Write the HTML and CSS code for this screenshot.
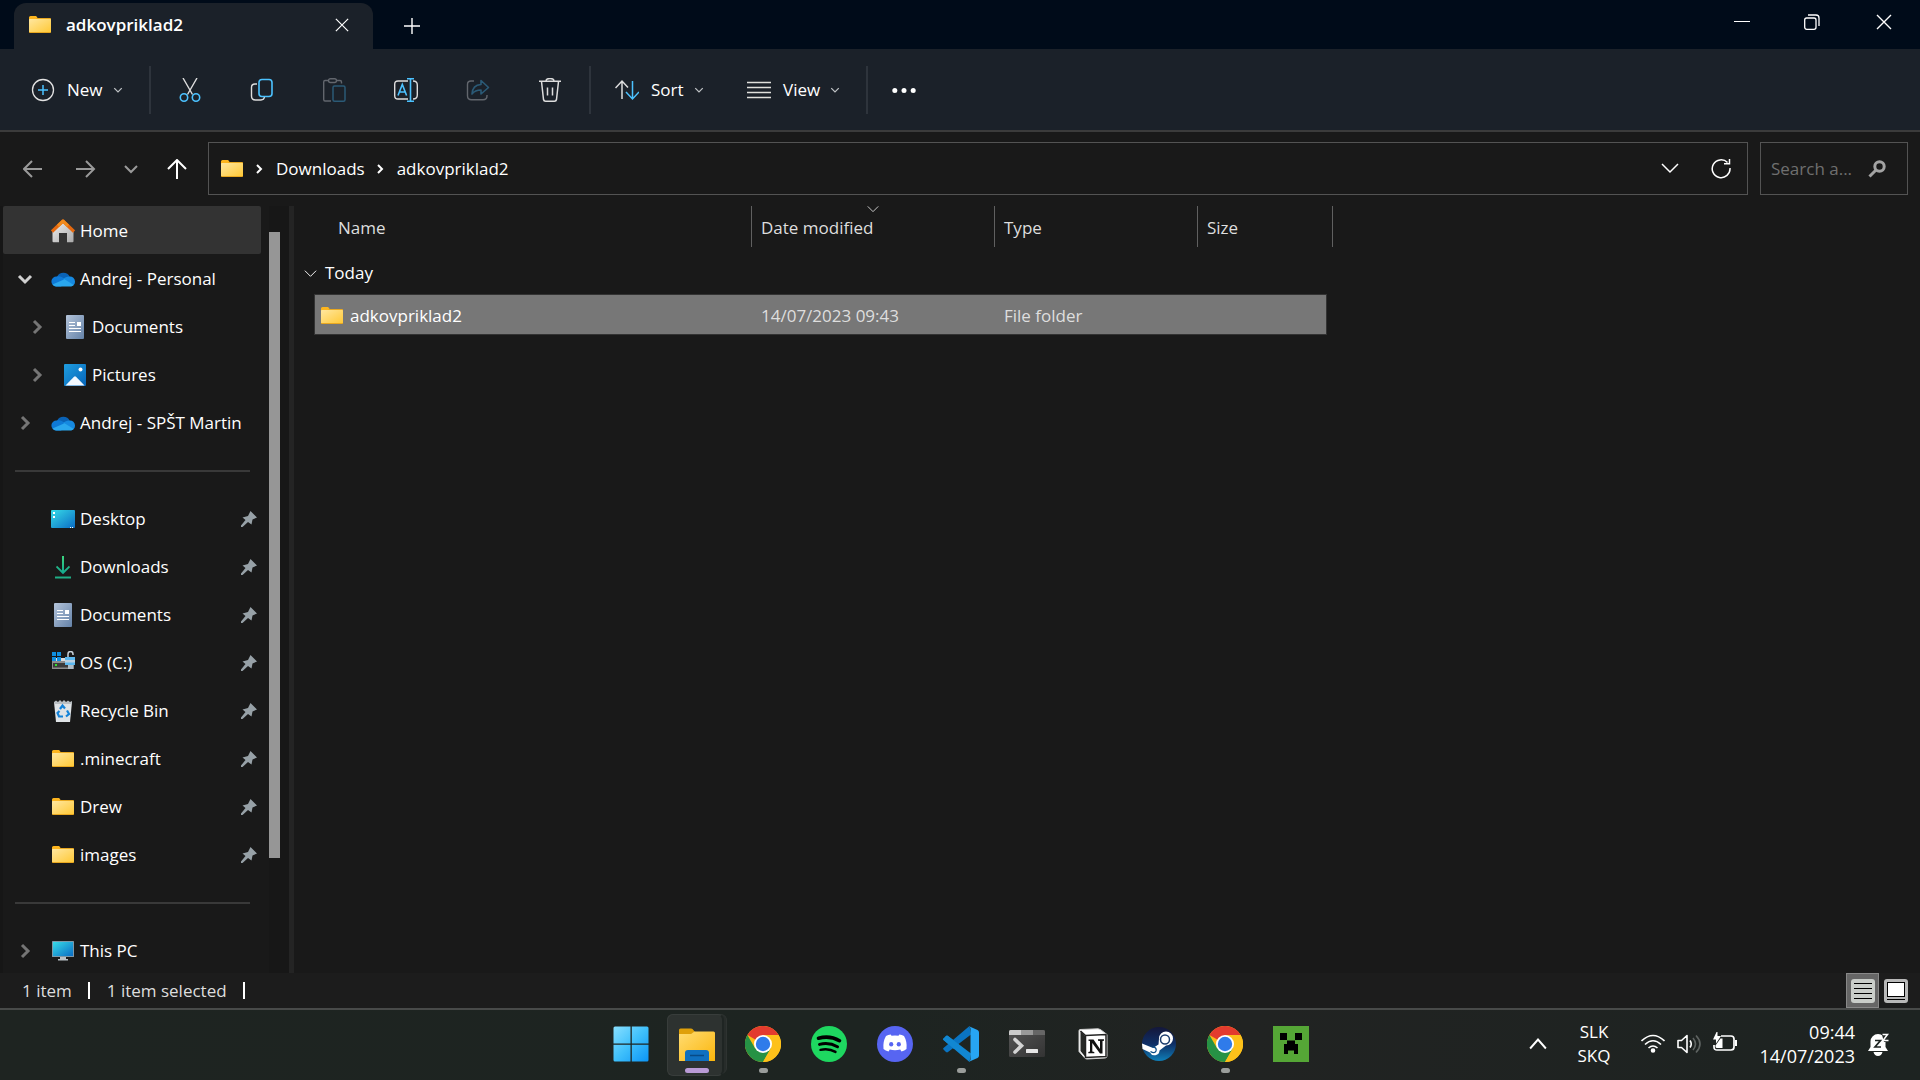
FILE: index.html
```html
<!DOCTYPE html>
<html lang="en">
  <head>
    <meta charset="UTF-8" />
    <meta name="viewport" content="width=device-width, initial-scale=1" />
    <title>adkovpriklad2</title>
    <link rel="stylesheet" href="styles.css">
  </head>
  <body>
    <!-- Shared icons -->
    <svg class="sprite" aria-hidden="true">
      <defs>
        <linearGradient id="gFolder" x1="0" y1="0" x2="1" y2="1">
          <stop offset="0" stop-color="#ffe7a0" /><stop offset="1" stop-color="#ffc937" />
        </linearGradient>
        <linearGradient id="gScreen" x1="0" y1="0" x2="1" y2="1">
          <stop offset="0" stop-color="#37dbe8" /><stop offset="1" stop-color="#0a6cc4" />
        </linearGradient>
        <linearGradient id="gDoc" x1="0" y1="0" x2="1" y2="1">
          <stop offset="0" stop-color="#b4c4da" /><stop offset="1" stop-color="#6482a8" />
        </linearGradient>
        <linearGradient id="gPic" x1="0" y1="0" x2="1" y2="1">
          <stop offset="0" stop-color="#1f9ee0" /><stop offset="1" stop-color="#0664b8" />
        </linearGradient>
        <linearGradient id="gHouse" x1="0" y1="0" x2="1" y2="1">
          <stop offset="0" stop-color="#efefef" /><stop offset="1" stop-color="#a9a9a9" />
        </linearGradient>
        <linearGradient id="gDown" x1="0" y1="0" x2="0" y2="1">
          <stop offset="0" stop-color="#3bd57f" /><stop offset="1" stop-color="#12a68f" />
        </linearGradient>
        <linearGradient id="gWin" gradientUnits="userSpaceOnUse" x1="0" y1="0" x2="36" y2="36">
          <stop offset="0" stop-color="#8be0ff" /><stop offset="0.5" stop-color="#3fc0fb" /><stop offset="1" stop-color="#0a93f5" />
        </linearGradient>
        <linearGradient id="gExp" x1="0" y1="0" x2="1" y2="1">
          <stop offset="0" stop-color="#ffdc72" /><stop offset="1" stop-color="#fbb60c" />
        </linearGradient>
        <linearGradient id="gSteam" x1="0" y1="0" x2="0" y2="1">
          <stop offset="0" stop-color="#14173a" /><stop offset="0.5" stop-color="#0f2f66" /><stop offset="1" stop-color="#0f7fb8" />
        </linearGradient>
        <linearGradient id="gTerm" x1="0" y1="0" x2="1" y2="1">
          <stop offset="0" stop-color="#555" /><stop offset="1" stop-color="#333" />
        </linearGradient>
      </defs>

      <symbol id="folder" viewBox="0 0 24 24">
        <rect x="1" y="5" width="22" height="15" rx="0.8" fill="#e9a820" />
        <rect x="1" y="6" width="22" height="13" rx="0.6" fill="url(#gFolder)" />
        <path d="M1 4.500Q1 3 2.500 3H8l1.500 1.500L8 6H1z" fill="#fdb51e" />
      </symbol>
      <symbol id="home" viewBox="0 0 24 24">
        <path d="M1.500 12 12 2.500 22.500 12v10.300q0 1-1 1H16V14H8v9.300H2.500q-1 0-1-1z" fill="url(#gHouse)" />
        <path d="M1 12.500 12 2l11 10.500" fill="none" stroke="#e5690f" stroke-width="3.200" stroke-linejoin="round" />
        <path d="M7 6.800 12 2l5 4.800" fill="none" stroke="#f08a1c" stroke-width="3" stroke-linejoin="round" />
      </symbol>
      <symbol id="cloud" viewBox="0 0 24 24">
        <path d="M6 10a7 7 0 0 1 12.800 0L12 15z" fill="#0a62b5" />
        <path d="M5 19.500a5 5 0 0 1 .8-10c3.200-1 5 .5 7.700 2.200L17 13.800 10 19.500z" fill="#0e79d6" />
        <path d="M18.500 9.500a5 5 0 0 1 5.500 5 5 5 0 0 1-4 5l-8-7.500c2-1.500 3.500-2.500 6.500-2.500z" fill="#1689e0" />
        <path d="M1.500 17.500 13.500 12.300 22.800 18a4.500 4.500 0 0 1-3.300 1.500H5.200a4.500 4.500 0 0 1-3.700-2z" fill="#2aa7ee" />
      </symbol>
      <symbol id="doc" viewBox="0 0 24 24">
        <rect x="3" y="0" width="18" height="24" rx="1" fill="url(#gDoc)" />
        <path d="M6 7.500h6M6 10.500h6M6 13.500h12M6 16.500h12" stroke="#fff" stroke-width="1.200" />
        <rect x="14" y="7" width="4" height="4" fill="#fff" />
      </symbol>
      <symbol id="pictures" viewBox="0 0 24 24">
        <rect x="1" y="1" width="22" height="22" rx="1" fill="url(#gPic)" />
        <path d="M2.500 22.500 11 13.800q1-1 2 0l8.500 8.700z" fill="#f2f8ff" />
        <circle cx="17.500" cy="6.500" r="2" fill="#fff" />
      </symbol>
      <symbol id="desktop" viewBox="0 0 24 24">
        <rect x="0" y="3" width="24" height="18" rx="1" fill="url(#gScreen)" />
        <path d="M2 5h2v2H2zM2 9h2v2H2z" fill="#fff" />
        <path d="M19 20h1v1h-1zM21 20h1v1h-1z" fill="#fff" />
      </symbol>
      <symbol id="download" viewBox="0 0 24 24">
        <path d="M11 1h2v14.500l5-4.800 1 1.500-7 7-7-7 1-1.500 5 4.800z" fill="url(#gDown)" />
        <rect x="4" y="21.500" width="16" height="2" fill="#1fae86" />
      </symbol>
      <symbol id="drive" viewBox="0 0 24 24">
        <path d="M4 7h18l1 5H1z" fill="#dcdcdc" />
        <rect x="1" y="10" width="22" height="8" fill="#8d8d8d" />
        <rect x="2" y="12" width="20" height="4.500" fill="#3b3b3b" />
        <rect x="4" y="13" width="2" height="2" fill="#35e02c" />
        <path d="M1 1h4v4H1zM6 1h4v4H6zM1 6h4v4H1zM6 6h4v4H6z" fill="#0f8fe0" />
        <path d="M17 6V3a2.500 2.500 0 0 1 5 0v1" fill="none" stroke="#c8d2da" stroke-width="1.500" />
        <path d="M14 6h10v8H14z" fill="#5cb8ef" /><path d="M14 9h10v2.500H14z" fill="#bcd0df" />
        <rect x="17" y="14" width="5" height="4" fill="#aebcc6" />
      </symbol>
      <symbol id="bin" viewBox="0 0 24 24">
        <path d="M3 3h18l-2 20H5z" fill="#dfe3e6" />
        <path d="m3 3 2-1.500L7 3l2-2 2 2 2-2 2 2 2-1.500L19 3l2-1v3H3z" fill="#b9bec2" />
        <path d="m9 10 2.500-3.500L14 9.500M16 11.500l2 3.500-3 2.500M12 17.500H8L6.500 14 8.500 12" fill="none" stroke="#1382d8" stroke-width="2.200" />
      </symbol>
      <symbol id="pc" viewBox="0 0 24 24">
        <rect x="1" y="2" width="22" height="16" rx="0.600" fill="#7e98a8" />
        <rect x="2" y="3" width="20" height="14" fill="url(#gScreen)" />
        <path d="M9 18h6v2h2v1.500H7V20h2z" fill="#b8c0c5" />
      </symbol>
      <symbol id="pin" viewBox="0 0 16 16">
        <path d="M9.500 0 16 6.500 11.500 8.500 10.500 13.500 7 11 1.500 16 0 16 0 14.500 4.500 9 1.500 6.500 7 5z" fill="#97a1a7" />
      </symbol>
      <symbol id="chev" viewBox="0 0 16 16">
        <path d="m2 5 6 6 6-6" fill="none" stroke="currentColor" />
      </symbol>
      <symbol id="cross" viewBox="0 0 16 16">
        <path d="m1 1 14 14M15 1 1 15" fill="none" stroke="currentColor" stroke-width="1.400" />
      </symbol>
      <symbol id="chrome" viewBox="0 0 36 36">
        <circle cx="18" cy="18" r="18" fill="#fbbc16" />
        <path d="M18 18 2.400 9A18 18 0 0 1 33.600 9z" fill="#e33b2e" />
        <path d="M2.400 9A18 18 0 0 0 18 36l7.800-13.500L18 18 10.200 22.500z" fill="#269245" />
        <path d="M18 9h15.600A18 18 0 0 1 18 36l7.800-13.500z" fill="#fdc11a" />
        <circle cx="18" cy="18" r="9" fill="#fff" />
        <circle cx="18" cy="18" r="7.200" fill="#2f7bea" />
      </symbol>
    </svg>

    <div class="window">
      <!-- Title bar -->
      <header class="titlebar">
        <div class="tab">
          <svg class="icon24"><use href="#folder" /></svg>
          <span class="tab-title">adkovpriklad2</span>
          <button class="tab-close" aria-label="Close tab"><svg><use href="#cross" /></svg></button>
        </div>
        <button class="new-tab" aria-label="New tab">
          <svg viewBox="0 0 16 16"><path d="M8 0v16M0 8h16" stroke="#fff" stroke-width="1.400" /></svg>
        </button>
        <div class="window-controls">
          <button aria-label="Minimize"><svg viewBox="0 0 16 16"><path d="M0 7.500h16" stroke="#fff" /></svg></button>
          <button aria-label="Restore">
            <svg viewBox="0 0 16 16" fill="none" stroke="#fff" stroke-width="1.300"><rect x="0.700" y="4" width="11.300" height="11.300" rx="2" /><path d="M4 1h8q3 0 3 3v8" /></svg>
          </button>
          <button aria-label="Close"><svg><use href="#cross" /></svg></button>
        </div>
      </header>

      <!-- Command bar -->
      <div class="toolbar">
        <button class="menu-btn menu-new">
          <svg class="icon24" viewBox="0 0 24 24" fill="none"><circle cx="12" cy="12" r="10.500" stroke="#e2e2e2" stroke-width="1.300" /><path d="M12 7v10M7 12h10" stroke="#4cc2ff" stroke-width="1.500" /></svg>
          <span>New</span>
          <svg class="caret"><use href="#chev" /></svg>
        </button>
        <span class="separator"></span>
        <button class="tool-btn" aria-label="Cut">
          <svg class="icon24" viewBox="0 0 24 24" fill="none"><path d="M5 0l9.500 16.500M19 0 9.500 16.500" stroke="#ddd" stroke-width="1.400" /><g stroke="#4cc2ff" stroke-width="1.600"><circle cx="6" cy="19.500" r="3.700" /><circle cx="18" cy="19.500" r="3.700" /></g></svg>
        </button>
        <button class="tool-btn" aria-label="Copy">
          <svg class="icon24" viewBox="0 0 24 24" fill="none"><path d="M7 6H5Q1.500 6 1.500 9.500V18q0 4 4 4H11q3 0 3.500-3" stroke="#ddd" stroke-width="1.400" /><rect x="9" y="1.500" width="13" height="17" rx="3" stroke="#4cc2ff" stroke-width="1.600" /></svg>
        </button>
        <button class="tool-btn" aria-label="Paste" disabled>
          <svg class="icon24" viewBox="0 0 24 24" fill="none"><path d="M6 2.500H3q-1.300 0-1.300 1.500v17.500q0 1.500 1.300 1.500H9M15 2.500h3q1.500 0 1.500 1.500v1.500" stroke="#62666d" stroke-width="1.400" /><rect x="6.500" y="0.700" width="8" height="3.800" rx="1.900" stroke="#62666d" stroke-width="1.400" /><rect x="11" y="8" width="12" height="15.200" rx="1.500" stroke="#2b5a76" stroke-width="1.500" /></svg>
        </button>
        <button class="tool-btn" aria-label="Rename">
          <svg class="icon24" viewBox="0 0 24 24" fill="none"><path d="M14 3H4Q.7 3 .7 6.300v11.400Q.7 21 4 21h10M19 3q4.300 0 4.300 4v10q0 4-4.300 4" stroke="#ddd" stroke-width="1.400" /><path d="M13 .8h7M13 23.200h7M16.500 1v22M4 17.500 8.300 6.500l4.300 11M5.500 14h5.700" stroke="#4cc2ff" stroke-width="1.600" /></svg>
        </button>
        <button class="tool-btn" aria-label="Share" disabled>
          <svg class="icon24" viewBox="0 0 24 24" fill="none"><path d="M8 3H5Q1.500 3 1.500 6.500v11.300q0 4 4 4H17q4 0 4-4V17" stroke="#62666d" stroke-width="1.400" /><path d="M15 2.500l7.500 7L15 16v-4q-6 0-9 4 .5-9 9-9.500z" stroke="#2b5a76" stroke-width="1.600" stroke-linejoin="round" /></svg>
        </button>
        <button class="tool-btn" aria-label="Delete">
          <svg class="icon24" viewBox="0 0 24 24" fill="none" stroke="#ddd" stroke-width="1.500"><path d="M1 3.200h22M8 3q0-2.500 4-2.500T16 3M3.500 3.500l2 18q.3 1.700 2 1.700h9q1.700 0 2-1.700l2-18M9.500 9.500v8M14.500 9.500v8" /></svg>
        </button>
        <span class="separator"></span>
        <button class="menu-btn">
          <svg class="icon24" viewBox="0 0 24 24" fill="none" stroke-width="1.500"><path d="M7 21V3M.5 10 7 3l6 6.500" stroke="#ddd" /><path d="M17.500 3v18M11 14l6.500 7 6.500-7" stroke="#4cc2ff" /></svg>
          <span>Sort</span>
          <svg class="caret"><use href="#chev" /></svg>
        </button>
        <button class="menu-btn menu-view">
          <svg class="icon24" viewBox="0 0 24 24"><path d="M0 4.500h24M0 9.500h24M0 14.500h24M0 19.500h24" stroke="#e0e0dc" stroke-width="1.400" /></svg>
          <span>View</span>
          <svg class="caret"><use href="#chev" /></svg>
        </button>
        <span class="separator"></span>
        <button class="tool-btn" aria-label="See more">
          <svg class="icon24" viewBox="0 0 24 24" fill="#fff"><circle cx="2.800" cy="12.500" r="2.500" /><circle cx="12" cy="12.500" r="2.500" /><circle cx="21.200" cy="12.500" r="2.500" /></svg>
        </button>
      </div>

      <!-- Navigation and address -->
      <div class="navbar">
        <div class="nav-buttons">
          <button class="dim" aria-label="Back"><svg viewBox="0 0 20 20"><path d="M19 10H1M9 2l-8 8 8 8" /></svg></button>
          <button class="dim" aria-label="Forward"><svg viewBox="0 0 20 20"><path d="M0 10h18M10 2l8 8-8 8" /></svg></button>
          <button class="dim recent" aria-label="Recent locations"><svg viewBox="0 0 20 20"><path d="m4 7 6 6 6-6" /></svg></button>
          <button aria-label="Up"><svg viewBox="0 0 20 20"><path d="M10 20V1M1 10l9-9 9 9" /></svg></button>
        </div>
        <div class="address">
          <svg class="icon24"><use href="#folder" /></svg>
          <svg class="crumb-arrow" viewBox="0 0 8 12"><path d="m1 2 4 4-4 4" /></svg>
          <a href="#">Downloads</a>
          <svg class="crumb-arrow" viewBox="0 0 8 12"><path d="m1 2 4 4-4 4" /></svg>
          <a href="#">adkovpriklad2</a>
          <div class="address-actions">
            <button aria-label="Previous locations"><svg class="icon20" viewBox="0 0 20 20"><path d="m2 5 8 8 8-8" fill="none" stroke="#fff" stroke-width="1.500" /></svg></button>
            <button aria-label="Refresh"><svg class="icon20" viewBox="0 0 20 20"><path d="M16.500 3.500A8.900 8.900 0 1 0 19 9M18.500 0v4.800H13" fill="none" stroke="#fff" stroke-width="1.500" /></svg></button>
          </div>
        </div>
        <div class="search">
          <input type="text" placeholder="Search a..." aria-label="Search adkovpriklad2" />
          <svg viewBox="0 0 18 18"><circle cx="11.500" cy="6.500" r="4.700" fill="none" stroke="#a3a3a3" stroke-width="3" /><path d="M8 10 1.500 16.500" stroke="#a3a3a3" stroke-width="3" /></svg>
        </div>
      </div>

      <div class="content">
        <!-- Folder tree -->
        <nav class="sidebar" aria-label="Folders">
          <ul>
            <li class="active"><span class="twist"></span><a href="#"><svg class="icon24"><use href="#home" /></svg>Home</a></li>
            <li><button class="twist open" aria-label="Collapse"><svg><use href="#chev" /></svg></button><a href="#"><svg class="icon24"><use href="#cloud" /></svg>Andrej - Personal</a></li>
            <li class="child"><button class="twist" aria-label="Expand"><svg><use href="#chev" /></svg></button><a href="#"><svg class="icon24"><use href="#doc" /></svg>Documents</a></li>
            <li class="child"><button class="twist" aria-label="Expand"><svg><use href="#chev" /></svg></button><a href="#"><svg class="icon24"><use href="#pictures" /></svg>Pictures</a></li>
            <li><button class="twist" aria-label="Expand"><svg><use href="#chev" /></svg></button><a href="#"><svg class="icon24"><use href="#cloud" /></svg>Andrej - SPŠT Martin</a></li>
            <li class="divider"></li>
            <li><span class="twist"></span><a href="#"><svg class="icon24"><use href="#desktop" /></svg>Desktop</a><svg class="pin"><use href="#pin" /></svg></li>
            <li><span class="twist"></span><a href="#"><svg class="icon24"><use href="#download" /></svg>Downloads</a><svg class="pin"><use href="#pin" /></svg></li>
            <li><span class="twist"></span><a href="#"><svg class="icon24"><use href="#doc" /></svg>Documents</a><svg class="pin"><use href="#pin" /></svg></li>
            <li><span class="twist"></span><a href="#"><svg class="icon24"><use href="#drive" /></svg>OS (C:)</a><svg class="pin"><use href="#pin" /></svg></li>
            <li><span class="twist"></span><a href="#"><svg class="icon24"><use href="#bin" /></svg>Recycle Bin</a><svg class="pin"><use href="#pin" /></svg></li>
            <li><span class="twist"></span><a href="#"><svg class="icon24"><use href="#folder" /></svg>.minecraft</a><svg class="pin"><use href="#pin" /></svg></li>
            <li><span class="twist"></span><a href="#"><svg class="icon24"><use href="#folder" /></svg>Drew</a><svg class="pin"><use href="#pin" /></svg></li>
            <li><span class="twist"></span><a href="#"><svg class="icon24"><use href="#folder" /></svg>images</a><svg class="pin"><use href="#pin" /></svg></li>
            <li class="divider"></li>
            <li><button class="twist" aria-label="Expand"><svg><use href="#chev" /></svg></button><a href="#"><svg class="icon24"><use href="#pc" /></svg>This PC</a></li>
          </ul>
          <div class="scrollbar"><div class="thumb"></div></div>
        </nav>

        <!-- File list -->
        <main class="files">
          <table>
            <colgroup>
              <col class="col-gutter" /><col class="col-name" /><col class="col-date" /><col class="col-type" /><col class="col-size" /><col class="col-end" />
            </colgroup>
            <thead>
              <tr>
                <td></td>
                <th class="name">Name</th>
                <th class="sorted">Date modified<svg><use href="#chev" /></svg></th>
                <th>Type</th>
                <th>Size</th>
                <td class="end"></td>
              </tr>
            </thead>
            <tbody>
              <tr class="group">
                <td colspan="6"><button><svg><use href="#chev" /></svg>Today</button></td>
              </tr>
              <tr class="selected">
                <td></td>
                <td class="cell name"><a href="#"><svg class="icon24"><use href="#folder" /></svg>adkovpriklad2</a></td>
                <td class="cell">14/07/2023 09:43</td>
                <td class="cell">File folder</td>
                <td class="cell last"></td>
                <td></td>
              </tr>
            </tbody>
          </table>
        </main>
      </div>

      <!-- Status bar -->
      <footer class="statusbar">
        <span>1 item</span>
        <span>1 item selected</span>
        <div class="view-switch">
          <button class="on" aria-label="Details view">
            <svg class="icon24" viewBox="0 0 24 24"><rect width="24" height="24" rx="3" fill="#c9cdc9" /><path d="M3 4.500h18M3 9.500h18M3 14.500h18M3 19.500h18" stroke="#000" /></svg>
          </button>
          <button aria-label="Large icons view">
            <svg class="icon24" viewBox="0 0 24 24"><rect width="24" height="24" rx="3" fill="#b8b8b8" /><rect x="3.500" y="3.500" width="17" height="14" fill="#fff" stroke="#000" /><path d="M3 20.500h18" stroke="#000" /></svg>
          </button>
        </div>
      </footer>
    </div>

    <!-- Taskbar -->
    <div class="taskbar">
      <div class="apps">
        <button aria-label="Start">
          <svg viewBox="0 0 36 36" fill="url(#gWin)"><path d="M2 .5h15.500v17H.5V2Q.5.500 2 .5zM18.800.5H34Q35.500.5 35.500 2v15.500H18.800zM.5 18.800h17v16.700H2Q.5 35.500.5 34zM18.800 18.800h16.700V34q0 1.500-1.500 1.500H18.800z" /></svg>
        </button>
        <button class="running current" aria-label="File Explorer">
          <span class="tile"></span>
          <svg viewBox="0 0 36 36"><path d="M0 4q0-1.500 1.500-1.500H12q1 0 1.500.6L16 6 11 9H0z" fill="#dfa00a" /><path d="M0 8h12l3.500-2.500H34.500Q36 5.500 36 7v28H0z" fill="url(#gExp)" /><path d="M6 35V27q0-3 3-3h18q3 0 3 3v8z" fill="#0f70c0" /><path d="M11 29.500h14" stroke="#084a86" stroke-width="1.500" /></svg>
        </button>
        <button class="running" aria-label="Chrome"><svg><use href="#chrome" /></svg></button>
        <button aria-label="Spotify">
          <svg viewBox="0 0 36 36" fill="none" stroke="#000" stroke-linecap="round"><circle cx="18" cy="18" r="18" fill="#1ed760" stroke="none" /><path d="M7.500 12.200q11.500-3 21 2.500" stroke-width="3.600" /><path d="M8.500 18.400q9.500-2.400 18 2.300" stroke-width="3" /><path d="M9.500 23.900q8-2 15 2" stroke-width="2.400" /></svg>
        </button>
        <button aria-label="Discord">
          <svg viewBox="0 0 36 36"><circle cx="18" cy="18" r="18" fill="#5765f2" /><path d="M14.500 9.800q3.500-.7 7 0l.8-1.400q2.600.4 4.700 1.600 3.300 5.500 2.500 13-2 1.600-5 2.500l-1.300-2q-5.200 1.300-10.400 0l-1.300 2q-3-.9-5-2.500-.8-7.500 2.500-13 2.100-1.200 4.700-1.600z" fill="#fff" /><ellipse cx="14.200" cy="18.300" rx="2.100" ry="2.300" fill="#5765f2" /><ellipse cx="21.800" cy="18.300" rx="2.100" ry="2.300" fill="#5765f2" /></svg>
        </button>
        <button class="running" aria-label="Visual Studio Code">
          <svg viewBox="0 0 36 36"><path d="M.5 12.500 3 10q1-.8 2 0L28 27.500 26.500 36 .5 14q-.8-.8 0-1.500z" fill="#1187d2" /><path d="M.5 23.500 3 26q1 .8 2 0L28 8.500 26.500 0 .5 22q-.8.800 0 1.500z" fill="#0a74c2" /><path d="M.5 12.500 3 10q1-.8 2 0l11 8.400-5 4.500L.5 14q-.8-.8 0-1.500z" fill="#1187d2" /><path d="M26 .2 34.500 4Q36 4.800 36 6.500v23q0 1.700-1.500 2.500L26 35.800q1.500-.8 1.500-2.500V2.700Q27.500 1 26 .2z" fill="#27a5f3" /></svg>
        </button>
        <button aria-label="Terminal">
          <svg viewBox="0 0 36 36"><rect y="4" width="36" height="27" rx="1.500" fill="url(#gTerm)" /><path d="M0 9V5.500Q0 4 1.500 4H12v5z" fill="#ccc" /><path d="M12 4h12v5H12z" fill="#999" /><path d="M24 4h10.500Q36 4 36 5.500V9H24z" fill="#666" /><path d="m6 13.500 6.500 6.300L6 26" fill="none" stroke="#d4d4d4" stroke-width="3.600" stroke-linecap="round" /><rect x="17" y="23" width="12" height="4" rx="0.600" fill="#e6e6e6" /></svg>
        </button>
        <button aria-label="Notion">
          <svg viewBox="0 0 36 36"><path d="M5 3.500 23 2.800l2.500.8L32 8.500V30q0 2-2 2L12 33q-1.500 0-2.500-1.200L4 25.500V5q0-1.400 1-1.500z" fill="#fff" stroke="#cfcfcf" /><path d="m5.500 5 4.500 4.500v21L5.500 25z" fill="#252725" /><path d="m7 4.500 16-.7L28.500 8 11.500 9z" fill="#fff" /><path d="M5.500 5 10.500 9.500 31 8.500v22L10.500 31.500V9.500" fill="none" stroke="#222" stroke-width="1.500" /><path d="M13.500 13.500h5L25 23v-8l-2-.3v-1.400h6v1.400l-1.500.3v12.500h-2.500L17.300 17v8.500l2 .4v1.300h-6v-1.300l1.700-.4V15l-1.500-.2z" fill="#111" /></svg>
        </button>
        <button aria-label="Steam">
          <svg viewBox="0 0 36 36"><circle cx="18" cy="18" r="17" fill="url(#gSteam)" /><path d="M1 17.500 12 22l5.500-3.500.5-6a7 7 0 1 1 7 7L18.500 24.500a5 5 0 0 1-9.500 2L1.500 23z" fill="#fff" /><circle cx="24" cy="13.500" r="4.500" fill="none" stroke="#1a3b6c" stroke-width="1.500" /><path d="M9.500 25.500q4 2.500 5.500-.5 1-3.500-3-4" fill="none" stroke="#0f4f88" stroke-width="1.300" /></svg>
        </button>
        <button class="running" aria-label="Chrome, second window"><svg><use href="#chrome" /></svg></button>
        <button aria-label="Minecraft">
          <svg viewBox="0 0 36 36"><rect width="36" height="36" fill="#55a636" /><path d="M7 7h7v7H7zM22 7h7v7h-7zM14 14.500h8V18h3v10h-4v-3.500h-6V28h-4V18h3z" fill="#000" /></svg>
        </button>
      </div>
      <div class="tray">
        <button aria-label="Show hidden icons"><svg class="up" viewBox="0 0 16 16"><path d="m1 12 7-8 7 8" fill="none" stroke="#fff" stroke-width="1.700" /></svg></button>
        <button class="lang">SLK<br />SKQ</button>
        <button class="quick" aria-label="Network, volume and battery">
          <svg class="icon24" viewBox="0 0 24 24" fill="none" stroke="#fff" stroke-width="1.600"><path d="M.5 9q11.500-11 23 0M4 12.500q8-7.500 16 0M7.500 16q4.500-4 9 0" /><circle cx="12" cy="18.500" r="1.500" fill="#fff" /></svg>
          <svg class="icon24" viewBox="0 0 24 24" fill="none" stroke-width="1.600"><path d="M1 8.500h3.500L10 3.500v17L4.500 15.500H1z" stroke="#fff" stroke-linejoin="round" /><path d="M13 8.500q2.500 3.500 0 7" stroke="#fff" /><path d="M16 6q5 6 0 12M19 3.500q8 8.500 0 17" stroke="#5f6462" /></svg>
          <svg class="icon24" viewBox="0 0 24 24" fill="none"><path d="M8 4h10q3 0 3 3v8q0 3-3 3H4q-3 0-3-3v-2" stroke="#fff" stroke-width="1.700" /><path d="M22 8h2v6h-2zM9.500 6.500V16H4q-1.500 0-1.500-1.500v-1L7.500 6.500z" fill="#fff" /><path d="M4.500 0v4H8L3 11.500V7.500H0L3.500 0z" fill="#fff" /></svg>
        </button>
        <button class="clock">09:44<br />14/07/2023</button>
        <button aria-label="Notifications">
          <svg class="icon24" viewBox="0 0 24 24"><path d="M11 2a7.500 7.500 0 0 1 7.500 7.500V15l2.500 4H1l2.500-4V9.500A7.500 7.500 0 0 1 11 2zM6.500 20h9q-1 4-4.500 4t-4.500-4z" fill="#fff" /><path d="M8 8.500h5.500L8 15h6" fill="none" stroke="#1f2523" stroke-width="1.700" /><path d="M14.500 1H22v9h-5z" fill="#1f2523" /><path d="M15.500 2.500h5l-4.500 6h5.500" fill="none" stroke="#fff" stroke-width="1.500" /></svg>
        </button>
      </div>
    </div>
  </body>
</html>
```

FILE: styles.css
```css
/* Reset */
* {
  margin: 0;
  padding: 0;
  box-sizing: border-box;
}
html,
body {
  height: 100%;
}
body {
  display: flex;
  flex-direction: column;
  overflow: hidden;
  background-color: #191919;
  color: #fff;
  font-family: "Segoe UI", "Open Sans", "Noto Sans", sans-serif;
  font-size: 17px;
  line-height: 24px;
}
button,
input {
  font: inherit;
  color: inherit;
  background: none;
  border: none;
}
a {
  color: inherit;
  text-decoration: none;
}
svg {
  display: block;
  flex: none;
}
.sprite {
  position: absolute;
  width: 0;
  height: 0;
}
.icon24 {
  width: 24px;
  height: 24px;
}
.icon20 {
  width: 20px;
  height: 20px;
}

.window {
  flex: 1;
  min-height: 0;
  display: flex;
  flex-direction: column;
}

/* Title bar */
.titlebar {
  display: flex;
  height: 49px;
  padding-left: 14px;
  background-color: #000b19;
}
.tab {
  display: flex;
  align-items: center;
  gap: 14px;
  width: 359px;
  margin-top: 3px;
  padding: 0 24px 2px 14px;
  background-color: #1b2129;
  border-radius: 12px 12px 0 0;
}
.tab-title {
  flex: 1;
  font-weight: 600;
}
.tab-close svg {
  width: 14px;
  height: 14px;
}
.new-tab {
  padding: 2px 31px 0;
}
.new-tab svg {
  width: 16px;
  height: 16px;
}
.window-controls {
  display: flex;
  margin-left: auto;
  height: 43px;
}
.window-controls button {
  display: flex;
  align-items: center;
  justify-content: center;
  width: 70px;
}
.window-controls svg {
  width: 16px;
  height: 16px;
}
.window-controls button:last-child {
  width: 73px;
}

/* Command bar */
.toolbar {
  display: flex;
  align-items: center;
  height: 83px;
  background-color: #1b2129;
  border-bottom: 2px solid #3b3b3b;
}
.separator {
  width: 2px;
  height: 48px;
  background-color: #2e343c;
}
.menu-btn {
  display: flex;
  align-items: center;
  gap: 12px;
  width: 132px;
  padding-left: 24px;
}
.menu-btn span {
  padding-top: 1px;
}
.menu-new {
  width: 149px;
  padding-left: 31px;
}
.menu-view {
  width: 143px;
}
.caret {
  width: 10px;
  height: 10px;
  margin-left: -2px;
  color: #c0c3c6;
  stroke-width: 2;
}
.tool-btn {
  display: flex;
  align-items: center;
  justify-content: center;
  width: 72px;
  height: 48px;
}
.separator + .tool-btn {
  margin-left: 3px;
}
.tool-btn + .separator {
  margin-left: 3px;
}
.separator + .tool-btn:last-child {
  margin-left: 0;
}

/* Navigation row */
.navbar {
  display: flex;
  align-items: center;
  height: 74px;
  padding: 0 12px 1px 0;
}
.nav-buttons {
  display: flex;
  width: 208px;
  padding-left: 6px;
}
.nav-buttons button {
  display: flex;
  justify-content: center;
  width: 53px;
}
.nav-buttons .recent {
  width: 38px;
}
.nav-buttons svg {
  width: 20px;
  height: 20px;
  fill: none;
  stroke: #fff;
  stroke-width: 2;
}
.nav-buttons .dim svg {
  stroke: #9a9a9a;
}
.address {
  flex: 1;
  display: flex;
  align-items: center;
  height: 53px;
  padding-left: 11px;
  border: 1px solid #535353;
}
.crumb-arrow {
  width: 8px;
  height: 12px;
  margin: 0 12px;
  fill: none;
  stroke: #fff;
  stroke-width: 2;
}
.address-actions {
  display: flex;
  gap: 31px;
  margin-left: auto;
  padding-right: 16px;
}
.search {
  display: flex;
  align-items: center;
  width: 148px;
  height: 53px;
  margin-left: 12px;
  padding: 0 21px 0 10px;
  border: 1px solid #535353;
}
.search input {
  flex: 1;
  min-width: 0;
  outline: none;
}
.search input::placeholder {
  color: #6f6f6f;
}
.search svg {
  width: 18px;
  height: 18px;
}

/* Content */
.content {
  flex: 1;
  min-height: 0;
  display: flex;
}
.sidebar {
  display: flex;
  justify-content: space-between;
  width: 294px;
  overflow: hidden;
  border-left: 3px solid #161616;
}
.sidebar ul {
  width: 258px;
  list-style: none;
}
.sidebar li {
  display: flex;
  align-items: center;
  height: 48px;
  padding: 1px 4px 0 0;
}
.sidebar li.active {
  background-color: #333;
  border-radius: 2px;
}
.sidebar li.child {
  padding-left: 12px;
}
.sidebar a {
  flex: 1;
  display: flex;
  align-items: center;
  gap: 5px;
  white-space: nowrap;
}
.sidebar li.divider::before {
  content: "";
  flex: 1;
  height: 2px;
  margin: 0 7px 0 12px;
  background-color: #393939;
}
.twist {
  display: flex;
  justify-content: center;
  width: 48px;
  padding-right: 4px;
  color: #757575;
}
.twist svg {
  width: 16px;
  height: 16px;
  stroke-width: 3;
  transform: rotate(-90deg);
}
.twist.open svg {
  color: #d0d0d0;
  transform: none;
}
.pin {
  width: 16px;
  height: 16px;
}
.scrollbar {
  width: 25px;
  padding-top: 26px;
  background-color: #171717;
  border-right: 5px solid #242424;
}
.thumb {
  width: 11px;
  height: calc(100% - 115px);
  background-color: #969696;
}

/* File list */
.files {
  flex: 1;
}
table {
  table-layout: fixed;
  width: 1039px;
  border-spacing: 0;
}
.col-gutter {
  width: 20px;
}
.col-name {
  width: 437px;
}
.col-date {
  width: 243px;
}
.col-type {
  width: 203px;
}
.col-size {
  width: 130px;
}
thead tr {
  height: 41px;
}
th {
  padding: 2px 0 0 9px;
  border-left: 1px solid #606060;
  color: #dedede;
  font-weight: 400;
  text-align: left;
}
th.name {
  padding-left: 24px;
  border-left: none;
}
thead .end {
  border-right: 1px solid #606060;
}
.sorted {
  position: relative;
}
.sorted svg {
  position: absolute;
  top: -4px;
  left: calc(50% - 7px);
  width: 14px;
  height: 14px;
}
.group td {
  height: 47px;
  padding: 5px 0 0 9px;
}
.group button {
  display: flex;
  align-items: center;
  gap: 7px;
}
.group svg {
  width: 15px;
  height: 15px;
}
.selected td {
  height: 41px;
}
.cell {
  padding: 3px 0 0 10px;
  color: #dedede;
  background-color: #777;
  border: solid #333;
  border-width: 1px 0;
}
.cell.name {
  padding-left: 5px;
  border-left-width: 1px;
  color: #fff;
}
.cell.last {
  border-right-width: 1px;
}
.cell a {
  display: flex;
  align-items: center;
  gap: 6px;
}

/* Status bar */
.statusbar {
  display: flex;
  align-items: center;
  height: 37px;
  padding: 0 7px 0 22px;
  background-color: #1c1c1c;
  border-bottom: 2px solid #484a49;
  color: #dedede;
}
.statusbar span {
  display: flex;
  align-items: center;
}
.statusbar span::after {
  content: "";
  width: 2px;
  height: 17px;
  margin: 0 17px 0 16px;
  background-color: #fff;
}
.view-switch {
  display: flex;
  align-self: stretch;
  margin-left: auto;
}
.view-switch button {
  display: flex;
  align-items: center;
  justify-content: center;
  width: 34px;
}
.view-switch .on {
  width: 33px;
  background-color: #666;
  border: 1px solid #888;
}

/* Taskbar */
.taskbar {
  display: grid;
  grid-template-columns: 1fr auto 1fr;
  height: 70px;
  background: linear-gradient(90deg, #1e2421, #1d2421 45%, #212322 65%, #1d2321);
}
.apps {
  grid-column: 2;
  display: flex;
  padding-left: 2px;
}
.apps button {
  position: relative;
  display: flex;
  align-items: center;
  justify-content: center;
  width: 66px;
  height: 68px;
}
.apps svg {
  position: relative;
  width: 36px;
  height: 36px;
}
/* Two stacked cards: more than one window is open */
.tile,
.tile::before {
  position: absolute;
  top: 4px;
  left: 3px;
  width: 60px;
  height: 60px;
  background-color: #272c2a;
  border: 1px solid #2e3331;
  border-radius: 6px;
}
.tile::before {
  content: "";
  top: -1px;
  left: -1px;
  width: 54px;
  background-color: #2d3230;
  border-color: #383d3b;
  border-right: 2px solid #1f2523;
}
.running::after {
  content: "";
  position: absolute;
  bottom: 5px;
  width: 9px;
  height: 5px;
  background-color: #9a9d9b;
  border-radius: 3px;
}
.running.current::after {
  width: 24px;
  background-color: #b99bd6;
}
.tray {
  display: flex;
  align-items: center;
  justify-content: flex-end;
  padding: 0 29px 2px 0;
}
.up {
  width: 18px;
  height: 18px;
}
.lang {
  width: 94px;
}
.quick {
  display: flex;
  gap: 12px;
}
.clock {
  width: 118px;
  margin-right: 12px;
  font-size: 18px;
  text-align: right;
}
```
